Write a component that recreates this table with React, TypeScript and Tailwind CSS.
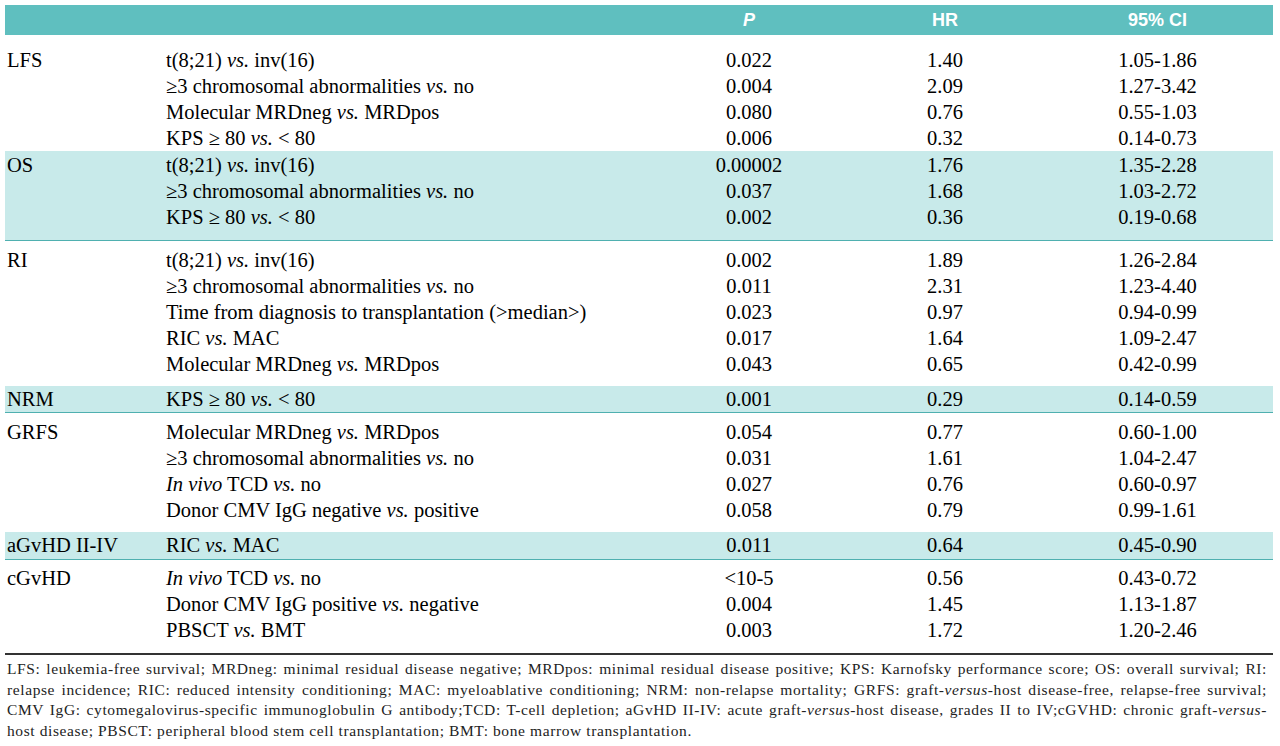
import type { ReactNode } from "react";

const V = ({ children }: { children: ReactNode }) => <i>{children}</i>;

type Row = [ReactNode, string, string, string];
type Group = { label: string; band?: boolean; pad: string; rows: Row[] };

const t821: ReactNode = <>t(8;21) <V>vs.</V> inv(16)</>;
const chrom: ReactNode = <>≥3 chromosomal abnormalities <V>vs.</V> no</>;
const mrd: ReactNode = <>Molecular MRDneg <V>vs.</V> MRDpos</>;
const kps: ReactNode = <>KPS ≥ 80 <V>vs.</V> &lt; 80</>;
const ric: ReactNode = <>RIC <V>vs.</V> MAC</>;
const tcd: ReactNode = <><V>In vivo</V> TCD <V>vs.</V> no</>;

const groups: Group[] = [
  {
    label: "LFS",
    pad: "pt-[12px] pb-0",
    rows: [
      [t821, "0.022", "1.40", "1.05-1.86"],
      [chrom, "0.004", "2.09", "1.27-3.42"],
      [mrd, "0.080", "0.76", "0.55-1.03"],
      [kps, "0.006", "0.32", "0.14-0.73"],
    ],
  },
  {
    label: "OS",
    band: true,
    pad: "pt-[1px] pb-[10px]",
    rows: [
      [t821, "0.00002", "1.76", "1.35-2.28"],
      [chrom, "0.037", "1.68", "1.03-2.72"],
      [kps, "0.002", "0.36", "0.19-0.68"],
    ],
  },
  {
    label: "RI",
    pad: "pt-[6px] pb-[9px]",
    rows: [
      [t821, "0.002", "1.89", "1.26-2.84"],
      [chrom, "0.011", "2.31", "1.23-4.40"],
      ["Time from diagnosis to transplantation (>median>)", "0.023", "0.97", "0.94-0.99"],
      [ric, "0.017", "1.64", "1.09-2.47"],
      [mrd, "0.043", "0.65", "0.42-0.99"],
    ],
  },
  {
    label: "NRM",
    band: true,
    pad: "pt-0 pb-0",
    rows: [[kps, "0.001", "0.29", "0.14-0.59"]],
  },
  {
    label: "GRFS",
    pad: "pt-[6px] pb-[9px]",
    rows: [
      [mrd, "0.054", "0.77", "0.60-1.00"],
      [chrom, "0.031", "1.61", "1.04-2.47"],
      [tcd, "0.027", "0.76", "0.60-0.97"],
      [<>Donor CMV IgG negative <V>vs.</V> positive</>, "0.058", "0.79", "0.99-1.61"],
    ],
  },
  {
    label: "aGvHD II-IV",
    band: true,
    pad: "pt-0 pb-[1px]",
    rows: [[ric, "0.011", "0.64", "0.45-0.90"]],
  },
  {
    label: "cGvHD",
    pad: "pt-[5px] pb-[10px]",
    rows: [
      [tcd, "<10-5", "0.56", "0.43-0.72"],
      [<>Donor CMV IgG positive <V>vs.</V> negative</>, "0.004", "1.45", "1.13-1.87"],
      [<>PBSCT <V>vs.</V> BMT</>, "0.003", "1.72", "1.20-2.46"],
    ],
  },
];

const footer: ReactNode[] = [
  <>LFS: leukemia-free survival; MRDneg: minimal residual disease negative; MRDpos: minimal residual disease positive; KPS: Karnofsky performance score; OS: overall survival; RI:</>,
  <>relapse incidence; RIC: reduced intensity conditioning; MAC: myeloablative conditioning; NRM: non-relapse mortality; GRFS: graft-<i>versus</i>-host disease-free, relapse-free survival;</>,
  <>CMV IgG: cytomegalovirus-specific immunoglobulin G antibody;TCD: T-cell depletion; aGvHD II-IV: acute graft-<i>versus</i>-host disease, grades II to IV;cGVHD: chronic graft-<i>versus</i>-</>,
  <>host disease; PBSCT: peripheral blood stem cell transplantation; BMT: bone marrow transplantation.</>,
];

export default function App() {
  return (
    <div className="w-[1280px] h-[746px] bg-white pt-[5px] font-['Liberation_Serif',serif] text-black">
      <div className="ml-[5px] w-[1268px]">
        <div className="flex h-[30px] items-center bg-[#5fbfbf] text-white font-bold text-[18px] font-['Liberation_Sans_Narrow','Liberation_Sans',sans-serif]">
          <div className="w-[645px]" />
          <div className="w-[198px] text-center italic">P</div>
          <div className="w-[194px] text-center">HR</div>
          <div className="w-[231px] text-center">95% CI</div>
        </div>

        {groups.map((g) => (
          <div
            key={g.label}
            className={`flex ${g.pad} ${g.band ? "bg-[#c8eaea] border-b border-[#4fb0b0]" : ""}`}
          >
            <div className="w-[155px] pl-[2px] text-[20.5px] leading-[26px]">{g.label}</div>
            <div className="flex-1">
              {g.rows.map((r, i) => (
                <div key={i} className="flex text-[20.5px] leading-[26px]">
                  <div className="w-[490px] pl-[6px] whitespace-nowrap">{r[0]}</div>
                  <div className="w-[198px] text-center">{r[1]}</div>
                  <div className="w-[194px] text-center">{r[2]}</div>
                  <div className="w-[231px] text-center">{r[3]}</div>
                </div>
              ))}
            </div>
          </div>
        ))}

        <div className="h-[2px] bg-[#333]" />
      </div>

      <div className="mt-[4px] ml-[7px] w-[1260px] text-[15.5px] leading-[20.5px] tracking-[0.6px] text-[#222]">
        {footer.map((line, i) => (
          <div
            key={i}
            className={i < footer.length - 1 ? "text-justify [text-align-last:justify] whitespace-nowrap" : "whitespace-nowrap"}
          >
            {line}
          </div>
        ))}
      </div>
    </div>
  );
}
